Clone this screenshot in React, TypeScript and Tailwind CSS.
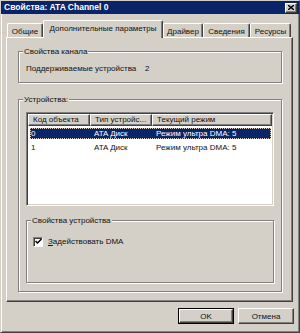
const tabs = [
  { label: 'Общие', w: 'w-[36px]' },
  { label: 'Дополнительные параметры', w: 'w-[120px]', active: true },
  { label: 'Драйвер', w: 'w-[40px]' },
  { label: 'Сведения', w: 'w-[47px]' },
  { label: 'Ресурсы', w: 'w-[41px]' },
]

const rows = [
  { id: '0', type: 'ATA Диск', mode: 'Режим ультра DMA: 5', selected: true },
  { id: '1', type: 'ATA Диск', mode: 'Режим ультра DMA: 5' },
]

const raised =
  'border border-t-white border-l-white border-r-[#404040] border-b-[#404040] shadow-[inset_-1px_-1px_0_#808080]'

const GroupBox = ({
  label,
  className,
  children,
}: {
  label: string
  className: string
  children?: React.ReactNode
}) => (
  <div
    className={`relative border border-[#808080] shadow-[inset_1px_1px_0_#fff,1px_1px_0_#fff] ${className}`}
  >
    <span className="absolute -top-[6px] left-[4px] bg-[#d4d0c8] px-[1px] leading-[11px] whitespace-nowrap">
      {label}
    </span>
    {children}
  </div>
)

export default function App() {
  return (
    <div
      className="w-[300px] h-[333px] bg-[#d4d0c8] flex flex-col border border-t-[#d4d0c8] border-l-[#d4d0c8] border-r-[#404040] border-b-[#404040] shadow-[inset_1px_1px_0_#fff,inset_-1px_-1px_0_#808080] text-[8px] text-[#111] whitespace-nowrap select-none"
      style={{ fontFamily: '"Liberation Sans", Arial, sans-serif' }}
    >
      {/* TITLE BAR */}
      <div className="h-[13px] bg-[#0a246a] flex items-center justify-between pl-[3px] pr-[2px]">
        <span className="text-white font-bold text-[8.5px] leading-[13px]">
          Свойства: ATA Channel 0
        </span>
        <div className={`w-[12px] h-[10px] bg-[#d4d0c8] flex items-center justify-center ${raised}`}>
          <svg width="6" height="5" viewBox="0 0 6 5">
            <path d="M0 0 L6 5 M6 0 L0 5" stroke="#000" strokeWidth="1.4" />
          </svg>
        </div>
      </div>

      {/* TABS */}
      <div className="mt-[6px] ml-[6px] h-[17px] flex items-end relative z-10">
        {tabs.map((t) =>
          t.active ? (
            <div
              key={t.label}
              className={`${t.w} h-[18px] -mb-[1px] bg-[#d4d0c8] border-t border-l border-r border-t-white border-l-white border-r-[#404040] rounded-t-[2px] shadow-[inset_-1px_0_0_#808080] flex items-start justify-center pt-[2px] leading-[11px]`}
            >
              {t.label}
            </div>
          ) : (
            <div
              key={t.label}
              className={`${t.w} h-[14px] border-t border-l border-r border-t-white border-l-white border-r-[#404040] rounded-t-[2px] shadow-[inset_-1px_0_0_#808080] flex items-start justify-center pt-[2px] leading-[11px]`}
            >
              {t.label}
            </div>
          )
        )}
      </div>

      {/* TAB PANEL */}
      <div className="ml-[5px] w-[287px] h-[265px] border border-t-white border-l-white border-r-[#404040] border-b-[#404040] shadow-[inset_-1px_-1px_0_#808080] flex flex-col">
        <GroupBox label="Свойства канала" className="ml-[11px] mt-[13px] w-[264px] h-[32px]">
          <div className="mt-[11px] ml-[7px] flex leading-[11px]">
            <span className="w-[119px]">Поддерживаемые устройства</span>
            <span>2</span>
          </div>
        </GroupBox>

        <GroupBox label="Устройства:" className="ml-[11px] mt-[16px] w-[264px] h-[193px] flex flex-col">
          {/* LIST */}
          <div className="ml-[7px] mt-[12px] w-[248px] h-[94px] bg-white border border-t-[#808080] border-l-[#808080] border-r-white border-b-white shadow-[inset_1px_1px_0_#404040,inset_-1px_-1px_0_#d4d0c8] p-[1px] flex flex-col">
            <div className="flex h-[12px] leading-[10px]">
              <div className={`w-[62px] bg-[#d4d0c8] pl-[4px] overflow-hidden ${raised}`}>Код объекта</div>
              <div className={`w-[62px] bg-[#d4d0c8] pl-[4px] overflow-hidden ${raised}`}>Тип устройс...</div>
              <div className={`flex-1 bg-[#d4d0c8] pl-[4px] overflow-hidden ${raised}`}>Текущий режим</div>
            </div>
            <div className="mt-[2px] flex flex-col gap-[3px]">
              {rows.map((r) => (
                <div
                  key={r.id}
                  className={`flex h-[11px] leading-[11px] ${
                    r.selected
                      ? 'bg-[#0a246a] text-white outline outline-1 outline-dotted outline-[#d4d0c8] -outline-offset-1 ml-[2px] mr-[1px]'
                      : 'ml-[2px]'
                  }`}
                >
                  <span className="w-[61px] pl-[1px]">{r.id}</span>
                  <span className="w-[62px] pl-[3px]">{r.type}</span>
                  <span className="pl-[3px]">{r.mode}</span>
                </div>
              ))}
            </div>
          </div>

          <GroupBox label="Свойства устройства" className="ml-[7px] mt-[14px] w-[248px] h-[63px]">
            <div className="mt-[15px] ml-[6px] flex items-center gap-[5px] leading-[11px]">
              <div className="w-[10px] h-[10px] bg-white border border-t-[#808080] border-l-[#808080] border-r-white border-b-white shadow-[inset_1px_1px_0_#404040] flex items-center justify-center">
                <svg width="7" height="7" viewBox="0 0 7 7">
                  <path d="M0.5 3 L2.5 5 L6.5 1" fill="none" stroke="#000" strokeWidth="1.5" />
                </svg>
              </div>
              <span>
                <span className="underline">З</span>адействовать DMA
              </span>
            </div>
          </GroupBox>
        </GroupBox>
      </div>

      {/* BUTTONS */}
      <div className="mt-[6px] mr-[5px] flex justify-end gap-[4px]">
        <div className="w-[56px] h-[16px] border border-black">
          <div className={`w-full h-full bg-[#d4d0c8] flex items-center justify-center leading-[11px] ${raised}`}>
            OK
          </div>
        </div>
        <div className={`w-[56px] h-[16px] bg-[#d4d0c8] flex items-center justify-center leading-[11px] ${raised}`}>
          Отмена
        </div>
      </div>
    </div>
  )
}
